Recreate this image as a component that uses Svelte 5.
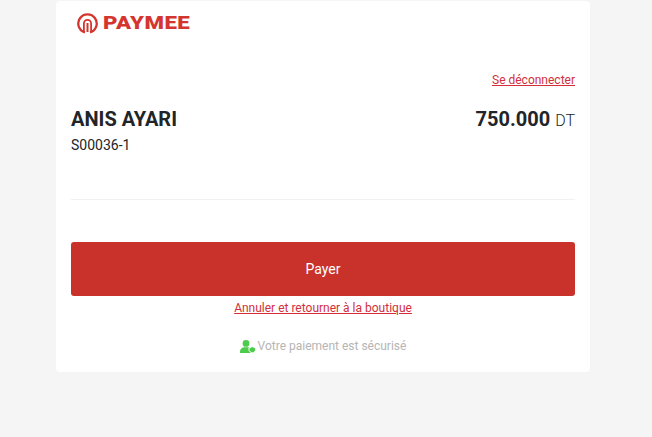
<script>
	const name = "ANIS AYARI";
	const ref = "S00036-1";
</script>

<div class="page">
	<main class="card">
		<div class="logo">
			<svg width="21" height="21" viewBox="0 0 21 21" fill="none" stroke="#d4362f">
				<path d="M8 19.400a9.200 9.200 0 1 1 5 0" stroke-width="2.300" />
				<path d="M6.900 18v-7.500a3.600 3.600 0 0 1 7.200 0V18" stroke-width="1.800" />
				<path d="M10.500 19v-9" stroke-width="2" />
			</svg>
			<span class="word">PAYMEE</span>
		</div>

		<div class="logout"><a href="#top">Se déconnecter</a></div>

		<div class="summary">
			<div>
				<h1>{name}</h1>
				<p>{ref}</p>
			</div>
			<div class="amount"><b>750.000</b><span>DT</span></div>
		</div>

		<hr />

		<button>Payer</button>
		<a class="cancel" href="#top">Annuler et retourner à la boutique</a>

		<div class="secure">
			<svg width="16" height="13" viewBox="0 0 16 13" fill="#4ccb4c">
				<circle cx="6" cy="3.400" r="3.400" />
				<path d="M0 13v-1.600C0 9 2 7.200 4.400 7.200h3.200c2 0 3.600 1 4.400 2.600V13z" />
				<path d="M12.300 6.600l3.300 1.300v2c0 1.400-1.400 2.500-3.300 3-1.900-.5-3.300-1.600-3.300-3v-2z" stroke="#fff" stroke-width="1" />
			</svg>
			<span>Votre paiement est sécurisé</span>
		</div>
	</main>
</div>

<style>
	:global(body) {
		background: #f5f5f5;
		font-family: Roboto, "Liberation Sans", sans-serif;
		color: #212529;
	}
	.page {
		display: flex;
		justify-content: center;
		padding: 1px 6px 0 0;
		height: 436px;
	}
	.card {
		width: 504px;
		height: 371px;
		padding: 0 15px;
		background: #fff;
		border-radius: 4px;
		display: flex;
		flex-direction: column;
	}
	.logo {
		display: flex;
		align-items: center;
		gap: 5px;
		height: 44px;
		padding-left: 6px;
	}
	.word {
		font-weight: 900;
		font-size: 19px;
		line-height: 20px;
		letter-spacing: 0.4px;
		color: #d4362f;
		transform: scaleX(1.17);
		transform-origin: left center;
	}
	.logout {
		margin-top: 26px;
		text-align: right;
		font-size: 12px;
		line-height: 18px;
	}
	a {
		color: #d32f3a;
		text-decoration: underline;
	}
	.summary {
		display: flex;
		justify-content: space-between;
		margin-top: 18px;
	}
	h1 {
		margin: 0;
		font-size: 20px;
		line-height: 24px;
		font-weight: 700;
	}
	p {
		margin: 4px 0 0;
		font-size: 14px;
		line-height: 21px;
	}
	.amount {
		display: flex;
		align-items: baseline;
		gap: 5px;
		font-size: 16px;
		line-height: 24px;
		font-weight: 300;
	}
	.amount b {
		font-size: 20px;
		font-weight: 700;
	}
	hr {
		width: 100%;
		margin: 43px 0 0;
		border: 0;
		border-top: 1px solid #f1f1f1;
	}
	button {
		margin-top: 42px;
		height: 54px;
		flex: none;
		border: 0;
		border-radius: 3px;
		background: #c8322b;
		color: #fff;
		font: 400 14px Roboto, sans-serif;
	}
	.cancel {
		margin-top: 3px;
		text-align: center;
		font-size: 12px;
		line-height: 18px;
	}
	.secure {
		margin-top: 20px;
		display: flex;
		justify-content: center;
		align-items: center;
		gap: 2px;
		font-size: 12px;
		line-height: 18px;
		color: #b5b5b5;
	}
</style>
